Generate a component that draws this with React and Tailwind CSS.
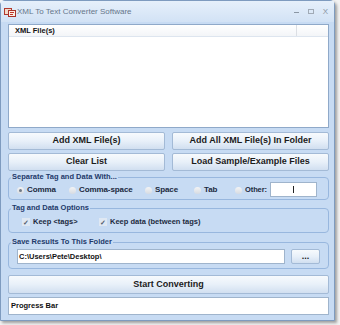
import React from 'react';

const font = { fontFamily: '"Liberation Sans", Arial, sans-serif' };

function Btn({ children, className = '' }) {
  return (
    <div
      className={
        'flex items-center justify-center rounded-[2px] border border-[#a3bad6] bg-gradient-to-b from-[#f7fafd] via-[#e8f0f9] to-[#d1dff0] text-[9px] font-bold text-[#1b1b1b] ' +
        className
      }
    >
      {children}
    </div>
  );
}

function Radio({ checked, label }) {
  return (
    <div className="flex items-center gap-[3px]">
      <span className="flex h-[7px] w-[7px] shrink-0 items-center justify-center rounded-full bg-gradient-to-b from-[#f4f4f4] to-[#d6dbe2]">
        {checked && <span className="h-[3px] w-[3px] rounded-full bg-[#6f7a88]" />}
      </span>
      <span className="whitespace-nowrap">{label}</span>
    </div>
  );
}

function Check({ label }) {
  return (
    <div className="flex items-center gap-[3px]">
      <span className="flex h-[8px] w-[8px] items-center justify-center bg-[#dfe8f3] text-[7px] leading-none text-[#54606e]">✓</span>
      <span>{label}</span>
    </div>
  );
}

function Group({ title, children, className = '' }) {
  return (
    <fieldset className={'rounded-[4px] border border-[#98b7de] px-[8px] ' + className}>
      <legend className="ml-[-6px] px-[1px] text-[7.5px] font-bold leading-[10px] text-[#22396a]">{title}</legend>
      {children}
    </fieldset>
  );
}

export default function App() {
  return (
    <div className="h-[325px] w-[340px] bg-[#f2f2f2]" style={font}>
      <div className="flex h-[321px] w-[335px] flex-col rounded-t-[5px] border border-[#7e9bbf] bg-[#c7dbf3] shadow-[2px_2px_3px_rgba(0,0,0,0.35)]">
        {/* title bar */}
        <div className="flex h-[21px] items-center bg-gradient-to-b from-[#e6f0fb] to-[#d2e2f5] pl-[3px] pr-[6px]">
          <svg width="12" height="11" viewBox="0 0 12 11" className="mr-[1px]">
            <rect x="0.5" y="2.5" width="7" height="6" fill="#f3d9c8" stroke="#b2382c" />
            <rect x="4.5" y="4.5" width="7" height="6" fill="#fbeee4" stroke="#a8322a" />
            <rect x="6" y="6" width="4" height="1" fill="#c0392b" />
            <rect x="6" y="8" width="3" height="1" fill="#c0392b" />
          </svg>
          <span className="text-[8px] text-[#66768a]">XML To Text Converter Software</span>
          <div className="ml-auto flex items-center gap-[9px] text-[#8a96a4]">
            <span className="mt-[2px] block h-[1px] w-[5px] bg-[#8a96a4]" />
            <span className="block h-[5px] w-[6px] border border-[#a0aab6]" />
            <span className="text-[8px] leading-none">X</span>
          </div>
        </div>

        <div className="flex flex-1 flex-col pl-[7px] pr-[5px] pt-[2px]">
          {/* list */}
          <div className="flex h-[104px] flex-col border border-[#8fa9c9] bg-white">
            <div className="flex h-[12px] border-b border-[#dde5ef] bg-gradient-to-b from-[#ffffff] to-[#f3f5f8]">
              <div className="flex flex-1 items-center border-r border-[#dcdfe4] pl-[6px] text-[7.5px] font-bold text-[#111]">XML File(s)</div>
              <div className="w-[31px]" />
            </div>
          </div>

          <div className="mt-[4px] grid grid-cols-2 gap-x-[7px] gap-y-[3px]">
            <Btn className="h-[18px]">Add XML File(s)</Btn>
            <Btn className="h-[18px]">Add All XML File(s) In Folder</Btn>
            <Btn className="h-[18px]">Clear List</Btn>
            <Btn className="h-[18px]">Load Sample/Example Files</Btn>
          </div>

          <Group title="Separate Tag and Data With..." className="mt-[1px] h-[28px]">
            <div className="flex h-[15px] items-center text-[8px] font-bold tracking-[-0.1px] text-[#1c2a3e]">
              <div className="w-[52px] pt-[1px]"><Radio checked label="Comma" /></div>
              <div className="w-[76px] pt-[1px]"><Radio label="Comma-space" /></div>
              <div className="w-[49px] pt-[1px]"><Radio label="Space" /></div>
              <div className="w-[41px] pt-[1px]"><Radio label="Tab" /></div>
              <div className="w-[35px] pt-[1px] text-[7.5px]"><Radio label="Other:" /></div>
              <div className="flex h-[15px] w-[47px] items-center justify-center border border-[#9fb4cc] bg-white">
                <span className="block h-[7px] w-[1px] bg-[#222]" />
              </div>
            </div>
          </Group>

          <Group title="Tag and Data Options" className="mt-[3px] h-[30px]">
            <div className="flex h-[18px] items-center pl-[5px] text-[7.5px] font-bold text-[#1c2a3e]">
              <div className="w-[77px]"><Check label="Keep <tags>" /></div>
              <Check label="Keep data (between tags)" />
            </div>
          </Group>

          <Group title="Save Results To This Folder" className="mt-[4px] h-[32px]">
            <div className="mt-[2px] flex items-center">
              <div className="flex h-[15px] w-[268px] items-center border border-[#9fb4cc] bg-white pl-[1px] text-[7.5px] font-bold text-[#111]">
                C:\Users\Pete\Desktop\
              </div>
              <Btn className="ml-[6px] h-[15px] w-[29px]">...</Btn>
            </div>
          </Group>

          <Btn className="mt-[6px] h-[19px]">Start Converting</Btn>

          <div className="mt-[3px] flex h-[18px] items-center border border-[#9fb4cc] bg-white pl-[2px] text-[7.5px] font-bold text-[#111]">
            Progress Bar
          </div>
        </div>
      </div>
    </div>
  );
}
